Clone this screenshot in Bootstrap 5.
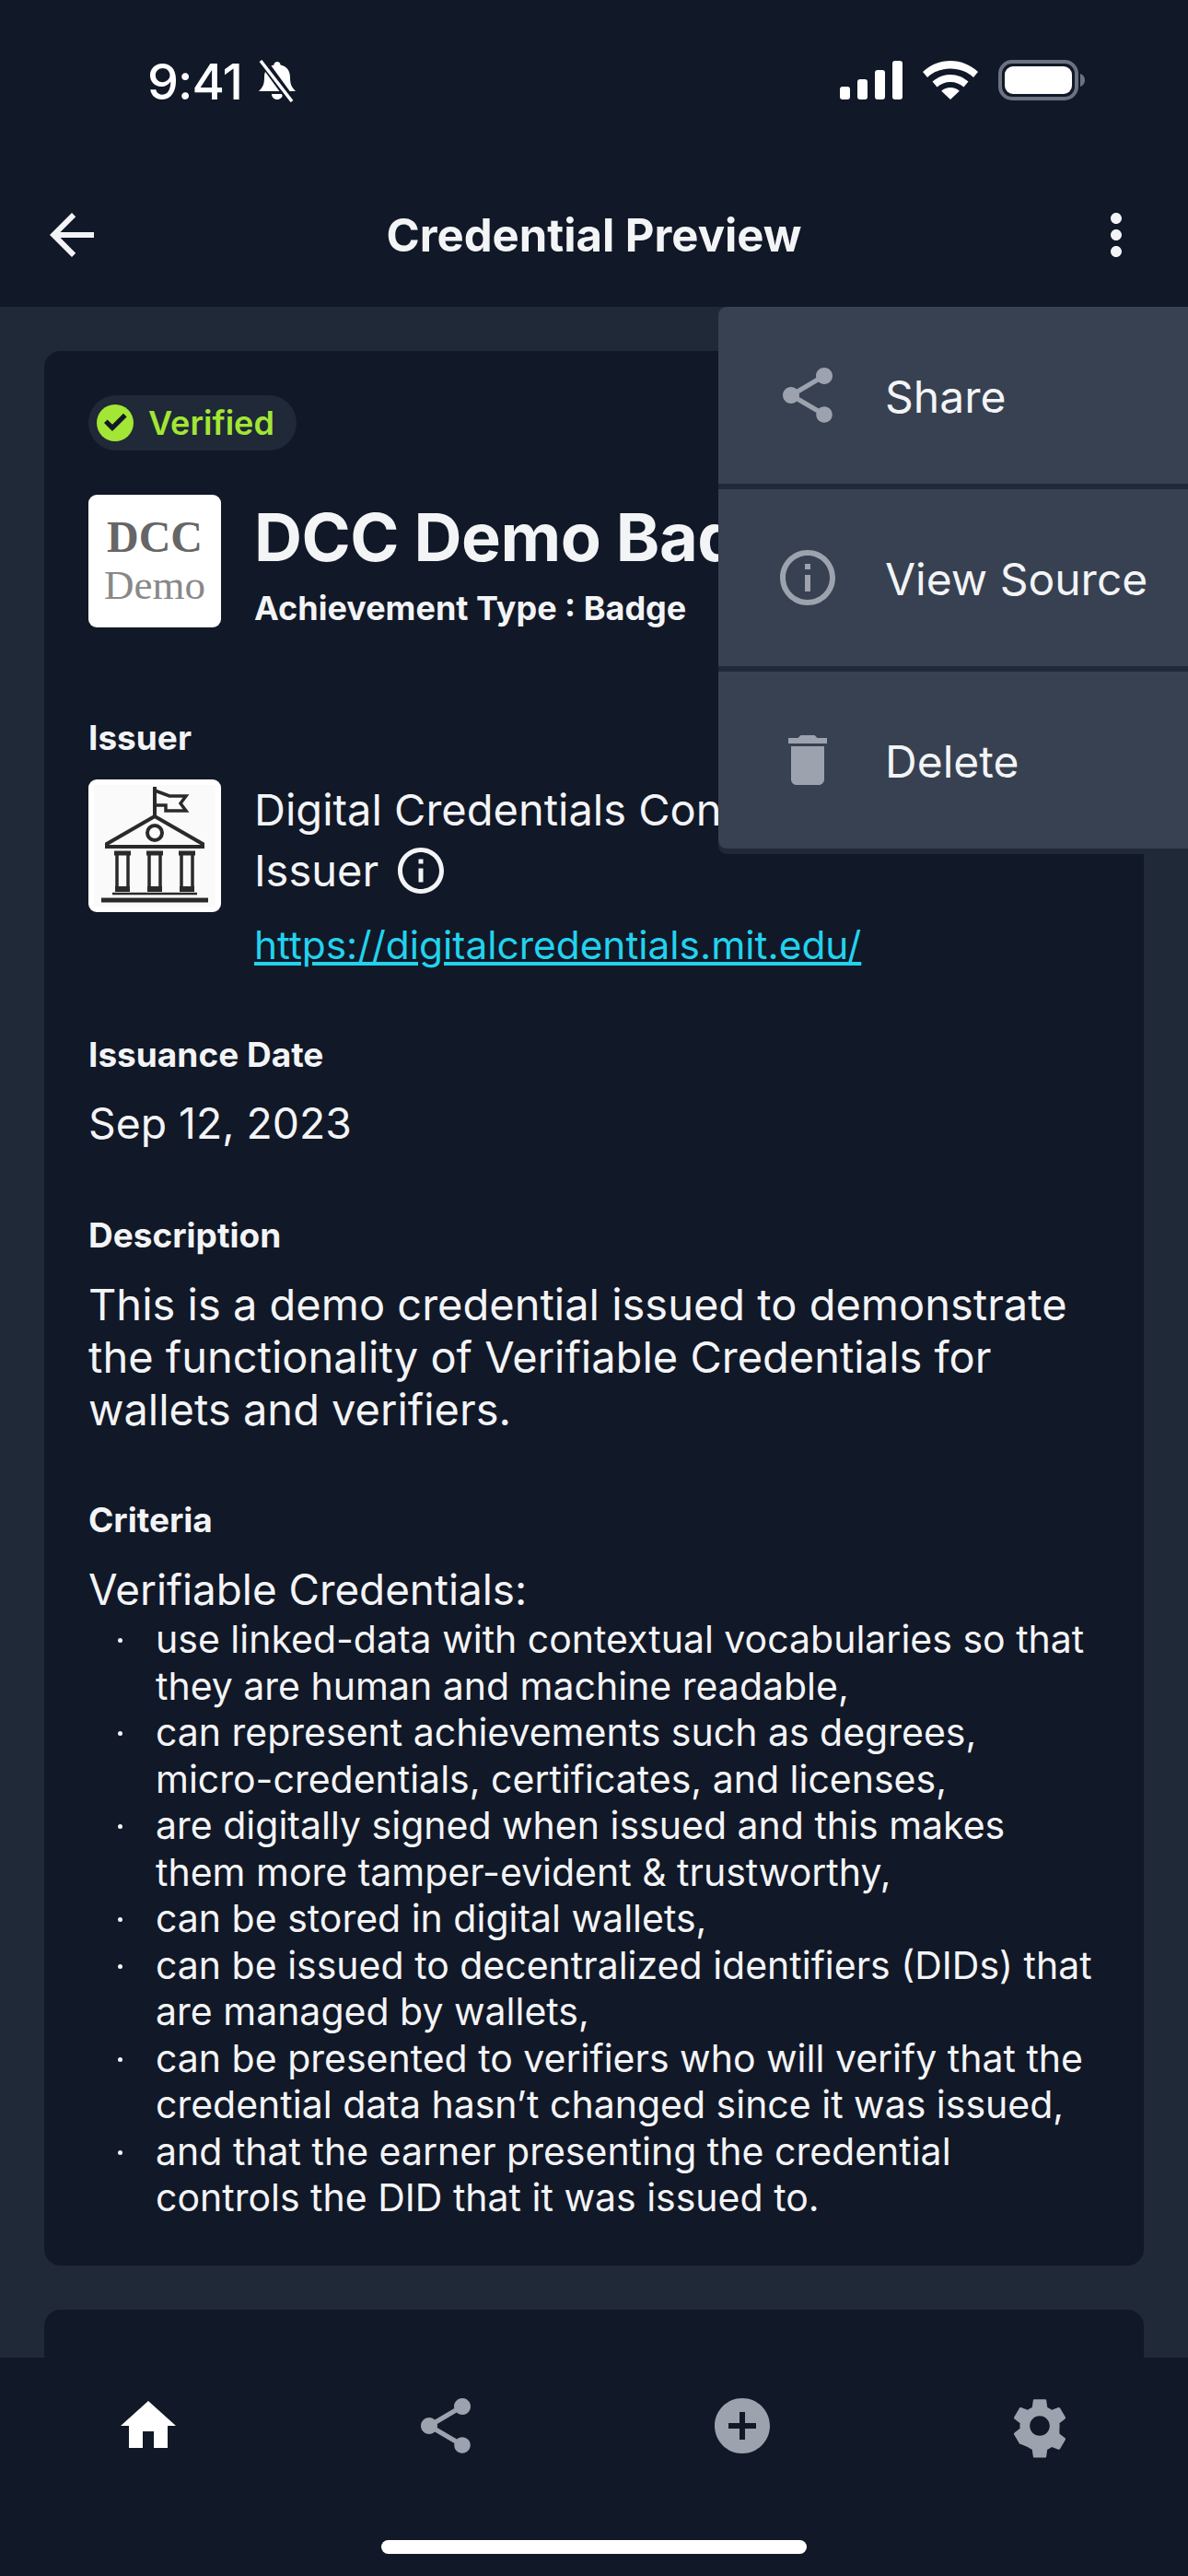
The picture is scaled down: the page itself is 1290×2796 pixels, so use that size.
<!DOCTYPE html>
<html lang="en">
<head>
<meta charset="utf-8">
<title>Credential Preview</title>
<link href="https://cdn.jsdelivr.net/npm/bootstrap@5.3.0/dist/css/bootstrap.min.css" rel="stylesheet">
<style>
html,body{margin:0;height:2796px;overflow:hidden;background:#111827}
body{font-family:Inter,"Liberation Sans",sans-serif;color:#f3f4f6}
.phone{width:1290px;height:2796px;position:relative;overflow:hidden}
.top-area{height:333px;background:#111827;flex:none}
.status-row{height:170px;padding:65px 112px 0 160px}
.clock{font-size:54px;font-weight:500;line-height:45px;color:#fff;letter-spacing:-1px}
.status-icons{gap:22px}
.head-row{height:163px;padding:6px 42px 0}
.head-title{font-size:49px;font-weight:700;line-height:58px;text-align:center;color:#f3f4f6;padding-top:2px}
.body-area{background:#1f2937;padding:48px 48px 0;min-height:0}
.sheet{background:#111827;border:0;border-radius:18px;padding:48px;color:#f3f4f6;flex:none}
.sheet-main{height:2078px}
.sheet-next{height:300px;margin-top:48px}
.pill{background:#1f2937;height:60px;width:226px;border-radius:30px;padding-left:5px;gap:12px;color:#a3e635;font-size:36px;font-weight:600}
.thumb{width:144px;height:144px;background:#fff;border-radius:9px;flex:none;overflow:hidden}
.head-block{margin-top:48px}
.side-col{margin-left:36px}
.dcc-a{font-family:"Liberation Serif",serif;font-weight:700;font-size:48px;line-height:52px;color:#666}
.dcc-b{font-family:"Liberation Serif",serif;font-size:45px;line-height:52px;color:#888}
.title-big{font-size:72px;font-weight:700;line-height:80px;white-space:nowrap;color:#f3f4f6;margin-top:6px;letter-spacing:-.5px}
.sub-bold{font-size:36px;font-weight:700;line-height:44px;color:#f3f4f6;white-space:nowrap;margin-top:15px}
.field-label{font-size:37px;font-weight:700;line-height:44px;color:#f3f4f6}
.gap-issuer{margin-top:97px}
.gap-date{margin-top:67px}
.gap-desc{margin-top:71px}
.gap-crit{margin-top:70px}
.issuer-row{margin-top:23px}
.text-big{font-size:47px;line-height:57px;color:#f3f4f6;margin-top:24px}
.text-date{font-size:46.300px}
.text-intro{font-size:45.800px;margin-top:25px}
.issuer-line{font-size:47px;line-height:66px;white-space:nowrap}
.url-link{color:#22d3ee;font-size:42.400px;line-height:60px;margin-top:18px}
.crit-list{list-style:none;margin:0;padding:0;font-size:41px;line-height:50.500px}
.crit-list li{position:relative;padding-left:73px}
.crit-list li::before{content:"";position:absolute;left:32px;top:24px;width:5px;height:5px;border-radius:50%;background:#f3f4f6}
.pop-menu{position:absolute;left:780px;top:333px;width:510px;background:#1f2937;border:0;border-radius:9px 0 0 9px;padding-bottom:6px;z-index:5}
.pop-item{height:192px;background:#374151;border:0;border-radius:0;padding:0 0 0 61px;gap:48px;color:#f3f4f6;font-size:48px;margin-bottom:6px}
.pop-item span{padding-top:3px}
.pop-item:last-child{margin-bottom:0}
.pop-item:first-child{border-radius:9px 0 0 0}
.pop-item:last-child{border-radius:0 0 0 9px}
.pop-item svg{flex:none;fill:#9ca3af;width:72px;height:72px}
.tabs{height:237px;background:#111827;flex:none;padding-top:38px;position:relative;z-index:3}
.tab-cell{width:322.500px;flex:none}
.home-bar{position:absolute;left:414px;top:198px;width:462px;height:15px;border-radius:8px;background:#fff}
</style>
</head>
<body>
<div class="phone d-flex flex-column">
  <div class="top-area">
    <div class="status-row d-flex justify-content-between align-items-start">
      <div class="d-flex align-items-center gap-3">
        <span class="clock">9:41</span>
        <svg width="44" height="46" viewBox="0 0 44 46" fill="#fff"><path d="M22 2c2 0 3.400 1.400 3.600 3.400C33 7 36 12 36 19c0 8 2 11 6 15H2c4-4 6-7 6-15 0-7 3-12 10.400-13.600C18.600 3.400 20 2 22 2zM16 37h12c0 3.500-2.600 6-6 6s-6-2.500-6-6z"/><path d="M6 1l32 44" stroke="#111827" stroke-width="9"/><path d="M4 1l34 44" stroke="#fff" stroke-width="3.500"/></svg>
      </div>
      <div class="d-flex align-items-center status-icons">
        <svg width="68" height="42" viewBox="0 0 68 42" fill="#fff"><rect x="0" y="28" width="11" height="14" rx="3"/><rect x="19" y="20" width="11" height="22" rx="3"/><rect x="38" y="10" width="11" height="32" rx="3"/><rect x="57" y="0" width="11" height="42" rx="3"/></svg>
        <svg width="60" height="42" viewBox="0 0 60 42" fill="#fff"><path d="M30 0c11.500 0 22 4.500 30 12l-5 6c-6.500-6-15-9.500-25-9.500S11.500 12 5 18l-5-6C8 4.500 18.500 0 30 0z"/><path d="M30 15c7.500 0 14 2.800 19.500 7.600l-5 6C40.500 25 35.500 23 30 23s-10.500 2-14.500 5.600l-5-6C16 17.800 22.500 15 30 15z"/><path d="M30 29c3.800 0 7 1.300 9.800 3.700L30 42l-9.800-9.300C23 30.300 26.200 29 30 29z"/></svg>
        <svg width="94" height="44" viewBox="0 0 94 44"><rect x="2" y="2" width="83" height="40" rx="13" fill="none" stroke="#6b7280" stroke-width="4"/><rect x="7" y="7" width="73" height="30" rx="9" fill="#fff"/><path d="M89 15c3 1 5 3.500 5 7s-2 6-5 7z" fill="#6b7280"/></svg>
      </div>
    </div>
    <nav class="navbar head-row d-flex align-items-center justify-content-between flex-nowrap">
      <svg width="72" height="72" viewBox="0 0 24 24" fill="#f3f4f6"><path d="M20 11H7.830l5.590-5.590L12 4l-8 8 8 8 1.410-1.410L7.830 13H20v-2z"/></svg>
      <div class="head-title flex-grow-1">Credential Preview</div>
      <svg width="72" height="72" viewBox="0 0 24 24" fill="#f3f4f6"><path d="M12 8c1.100 0 2-.9 2-2s-.9-2-2-2-2 .9-2 2 .9 2 2 2zm0 2c-1.100 0-2 .9-2 2s.9 2 2 2 2-.9 2-2-.9-2-2-2zm0 6c-1.100 0-2 .9-2 2s.9 2 2 2 2-.9 2-2-.9-2-2-2z"/></svg>
    </nav>
  </div>

  <main class="body-area flex-grow-1 overflow-hidden d-flex flex-column">
    <section class="card sheet sheet-main">
      <div class="pill d-flex align-items-center"><svg width="48" height="48" viewBox="0 0 24 24"><circle cx="12" cy="12" r="10" fill="#a3e635"/><path d="M10.500 16.500l-4.500-4.500 1.800-1.800 2.700 2.700 6-6 1.800 1.800z" fill="#111827"/></svg><span>Verified</span></div>
      <div class="d-flex head-block">
        <div class="thumb d-flex flex-column align-items-center justify-content-center"><span class="dcc-a">DCC</span><span class="dcc-b">Demo</span></div>
        <div class="side-col">
          <div class="title-big">DCC Demo Badge</div>
          <div class="sub-bold">Achievement Type : Badge</div>
        </div>
      </div>
      <div class="field-label gap-issuer">Issuer</div>
      <div class="d-flex issuer-row">
        <div class="thumb">
          <svg width="144" height="144" viewBox="0 0 144 144" fill="none" stroke="#2a2a2a" stroke-width="4"><rect x="6" y="6" width="132" height="132" fill="#fafafa" stroke="none"/><path d="M72 8v32"/><path d="M72 12l16 6h18l-6 8 6 8H84v-6H72" stroke-width="3.500"/><path d="M72 40L20 70v3h104v-3z"/><circle cx="72" cy="58" r="8"/><path d="M28 80h18M63 80h18M98 80h18" stroke-width="5"/><path d="M31 80v36M43 80v36M66 80v36M78 80v36M101 80v36M113 80v36" stroke-width="3.500"/><path d="M29 119h16M64 119h16M99 119h16" stroke-width="6"/><path d="M26 124h92" stroke-width="2.500"/><path d="M14 131h116" stroke-width="5"/></svg>
        </div>
        <div class="side-col">
          <div class="issuer-line">Digital Credentials Consortium</div>
          <div class="issuer-line d-flex align-items-center gap-3">Issuer <svg width="60" height="60" viewBox="0 0 24 24" fill="#f3f4f6"><path d="M11 7h2v2h-2zm0 4h2v6h-2zm1-9C6.480 2 2 6.480 2 12s4.480 10 10 10 10-4.480 10-10S17.520 2 12 2zm0 18c-4.410 0-8-3.590-8-8s3.590-8 8-8 8 3.590 8 8-3.590 8-8 8z"/></svg></div>
          <a class="url-link d-block" href="#">https://digitalcredentials.mit.edu/</a>
        </div>
      </div>
      <div class="field-label gap-date">Issuance Date</div>
      <div class="text-big text-date">Sep 12, 2023</div>
      <div class="field-label gap-desc">Description</div>
      <div class="text-big">This is a demo credential issued to demonstrate the functionality of Verifiable Credentials for wallets and verifiers.</div>
      <div class="field-label gap-crit">Criteria</div>
      <div class="text-big text-intro">Verifiable Credentials:</div>
      <ul class="crit-list">
        <li>use linked-data with contextual vocabularies so that they are human and machine readable,</li>
        <li>can represent achievements such as degrees, micro-credentials, certificates, and licenses,</li>
        <li>are digitally signed when issued and this makes them more tamper-evident &amp; trustworthy,</li>
        <li>can be stored in digital wallets,</li>
        <li>can be issued to decentralized identifiers (DIDs) that are managed by wallets,</li>
        <li>can be presented to verifiers who will verify that the credential data hasn’t changed since it was issued,</li>
        <li>and that the earner presenting the credential controls the DID that it was issued to.</li>
      </ul>
    </section>
    <section class="card sheet sheet-next"></section>
  </main>

  <div class="tabs d-flex align-items-start">
    <div class="tab-cell d-flex justify-content-center"><svg width="72" height="72" viewBox="0 0 24 24" fill="#fff"><path d="M10 20v-6h4v6h5v-8h3L12 3 2 12h3v8z"/></svg></div>
    <div class="tab-cell d-flex justify-content-center"><svg width="72" height="72" viewBox="0 0 24 24" fill="#9ca3af"><path d="M18 16.080c-.76 0-1.440.3-1.960.77L8.910 12.700c.05-.23.09-.46.09-.7s-.04-.47-.09-.7l7.050-4.110c.54.5 1.250.81 2.040.81 1.660 0 3-1.340 3-3s-1.340-3-3-3-3 1.340-3 3c0 .24.04.47.09.7L8.040 9.810C7.500 9.310 6.790 9 6 9c-1.660 0-3 1.340-3 3s1.340 3 3 3c.79 0 1.500-.31 2.040-.81l7.120 4.160c-.05.21-.08.43-.08.65 0 1.610 1.310 2.920 2.920 2.920s2.920-1.310 2.920-2.920-1.310-2.920-2.920-2.920z"/></svg></div>
    <div class="tab-cell d-flex justify-content-center"><svg width="72" height="72" viewBox="0 0 24 24" fill="#9ca3af"><path d="M12 2C6.480 2 2 6.480 2 12s4.480 10 10 10 10-4.480 10-10S17.520 2 12 2zm5 11h-4v4h-2v-4H7v-2h4V7h2v4h4v2z"/></svg></div>
    <div class="tab-cell d-flex justify-content-center"><svg width="72" height="72" viewBox="0 0 24 24" fill="#9ca3af"><path d="M19.140 12.940c.04-.3.06-.61.06-.94 0-.32-.02-.64-.07-.94l2.030-1.580c.18-.14.23-.41.12-.61l-1.920-3.320c-.12-.22-.37-.29-.59-.22l-2.390.96c-.5-.38-1.030-.7-1.620-.94l-.36-2.540c-.04-.24-.24-.41-.48-.41h-3.840c-.24 0-.43.17-.47.41l-.36 2.540c-.59.24-1.130.57-1.620.94l-2.390-.96c-.22-.08-.47 0-.59.22L2.740 8.870c-.12.21-.08.47.12.61l2.030 1.580c-.05.3-.09.63-.09.94s.02.64.07.94l-2.030 1.580c-.18.14-.23.41-.12.61l1.920 3.320c.12.22.37.29.59.22l2.390.96c.5.38 1.030.7 1.620.94l.36 2.540c.05.24.24.41.48.41h3.840c.24 0 .44-.17.47-.41l.36-2.540c.59-.24 1.130-.56 1.620-.94l2.390.96c.22.08.47 0 .59-.22l1.920-3.320c.12-.22.07-.47-.12-.61l-2.010-1.580zM12 15.600c-1.980 0-3.600-1.620-3.600-3.600s1.620-3.600 3.600-3.600 3.600 1.620 3.600 3.600-1.620 3.600-3.600 3.600z"/></svg></div>
    <div class="home-bar"></div>
  </div>

  <div class="list-group pop-menu">
    <div class="list-group-item pop-item d-flex align-items-center"><svg viewBox="0 0 24 24"><path d="M18 16.080c-.76 0-1.440.3-1.960.77L8.910 12.700c.05-.23.09-.46.09-.7s-.04-.47-.09-.7l7.050-4.110c.54.5 1.250.81 2.040.81 1.660 0 3-1.340 3-3s-1.340-3-3-3-3 1.340-3 3c0 .24.04.47.09.7L8.040 9.810C7.500 9.310 6.790 9 6 9c-1.660 0-3 1.340-3 3s1.340 3 3 3c.79 0 1.500-.31 2.040-.81l7.120 4.160c-.05.21-.08.43-.08.65 0 1.610 1.310 2.920 2.920 2.920s2.920-1.310 2.920-2.920-1.310-2.920-2.920-2.920z"/></svg><span>Share</span></div>
    <div class="list-group-item pop-item d-flex align-items-center"><svg viewBox="0 0 24 24"><path d="M11 7h2v2h-2zm0 4h2v6h-2zm1-9C6.480 2 2 6.480 2 12s4.480 10 10 10 10-4.480 10-10S17.520 2 12 2zm0 18c-4.410 0-8-3.590-8-8s3.590-8 8-8 8 3.590 8 8-3.590 8-8 8z"/></svg><span>View Source</span></div>
    <div class="list-group-item pop-item d-flex align-items-center"><svg viewBox="0 0 24 24"><path d="M6 19c0 1.100.9 2 2 2h8c1.100 0 2-.9 2-2V7H6v12zM19 4h-3.500l-1-1h-5l-1 1H5v2h14V4z"/></svg><span>Delete</span></div>
  </div>
</div>
</body>
</html>
